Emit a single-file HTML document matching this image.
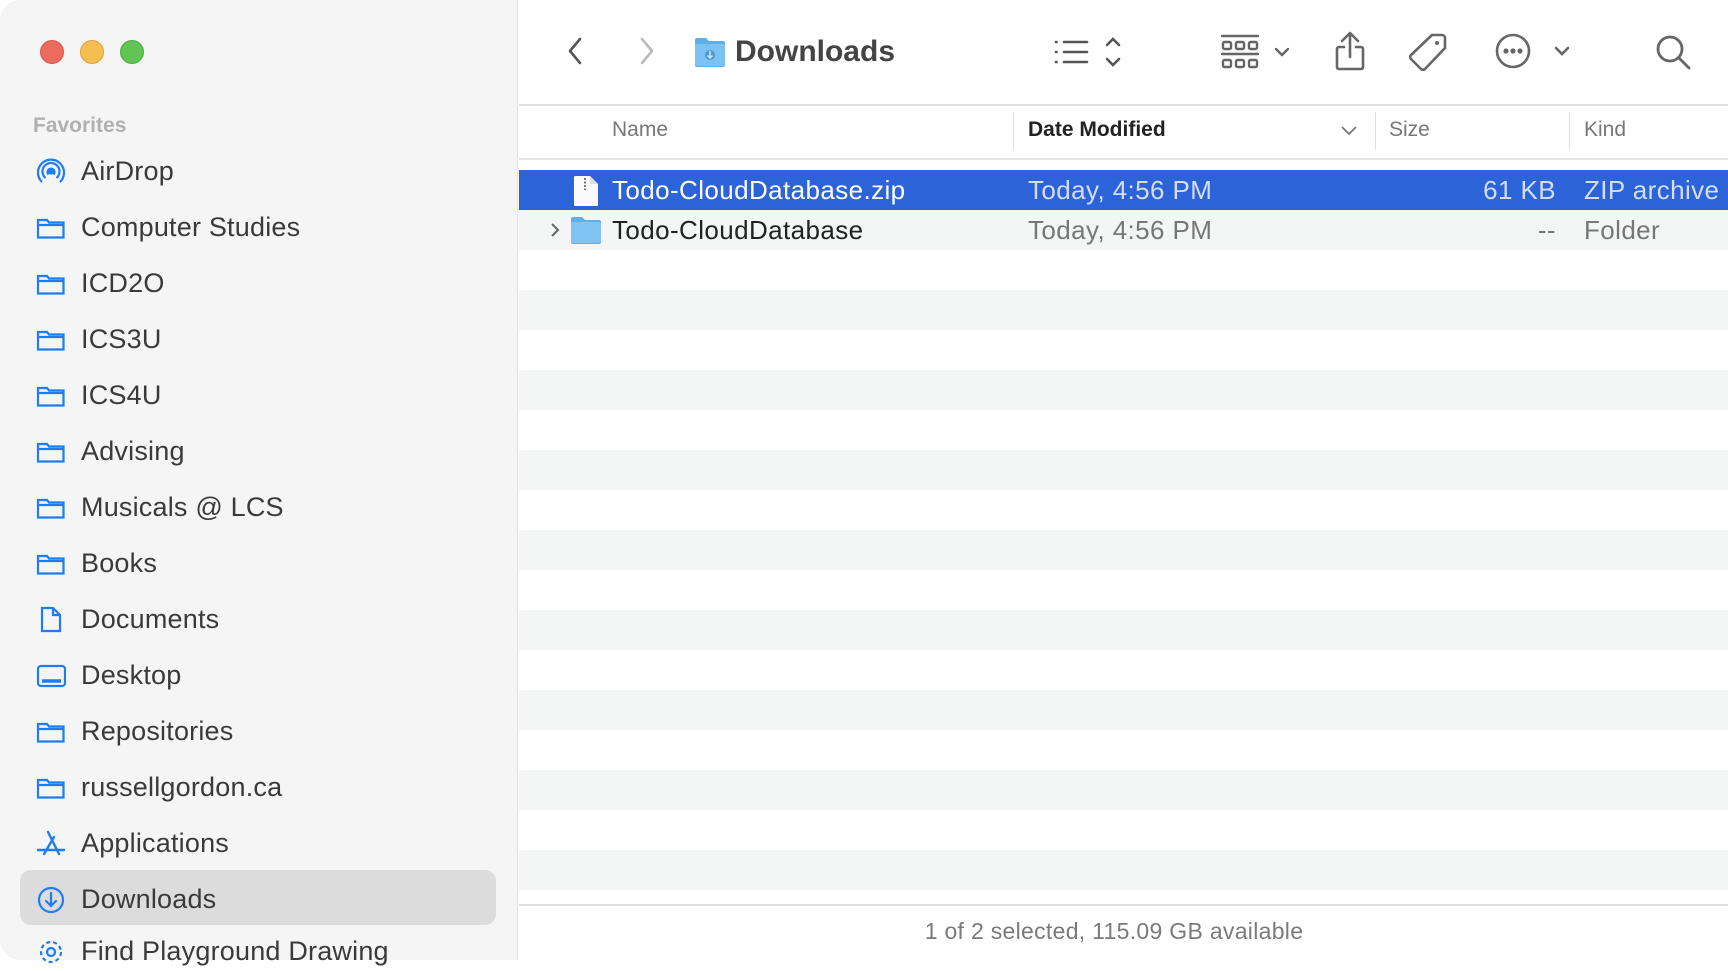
<!DOCTYPE html>
<html><head><meta charset="utf-8"><style>
*{margin:0;padding:0;box-sizing:border-box}
body{width:1728px;height:960px;overflow:hidden;background:#fff;font-family:"Liberation Sans",sans-serif;position:relative}
.sb{position:absolute;left:0;top:0;width:518px;height:960px;background:#f5f5f5;border-right:1px solid #e2e2e2;border-radius:20px 0 0 20px}
.tl{position:absolute;top:40px;width:24px;height:24px;border-radius:50%}
.fav{position:absolute;left:33px;top:114px;font-size:21px;font-weight:bold;color:#b0b0b0}
.it{position:absolute;left:0;height:40px;width:518px;font-size:27px;color:#3a3a3a;line-height:40px;letter-spacing:0.2px}
.it span{position:absolute;left:81px}
.it svg{position:absolute;left:36px;top:6px}
.sel{position:absolute;left:20px;top:870px;width:476px;height:55px;background:#dcdcdc;border-radius:11px}
.hd{position:absolute;top:130px;font-size:21px;color:#777;transform:translateY(-50%)}
.vd{position:absolute;top:112px;width:1px;height:38px;background:#e0e0e0}
.row{position:absolute;left:519px;width:1209px;height:40px}
.cell{position:absolute;font-size:26px;line-height:40px;top:0;letter-spacing:0.4px;white-space:nowrap}
</style></head><body>
<div class="sb"></div>
<div class="tl" style="left:40px;background:#ed6a5e;border:1px solid #d55548"></div>
<div class="tl" style="left:80px;background:#f5bf4f;border:1px solid #d9a23c"></div>
<div class="tl" style="left:120px;background:#61c554;border:1px solid #4ea842"></div>
<div class="fav">Favorites</div>

<div class="sel"></div>
<div class="it" style="top:151px"><svg width="30" height="30" viewBox="0 0 30 30" fill="none" stroke="#1f7cf6" stroke-width="2.2"><path d="M6 25A13 13 0 1 1 24 25"/><path d="M9.5 21A8.5 8.5 0 1 1 20.5 21"/><path d="M12.5 17.5A3.5 3.5 0 1 1 17.5 17.5"/><circle cx="15" cy="15" r="1.5" fill="#1f7cf6"/></svg><span>AirDrop</span></div>
<div class="it" style="top:207px"><svg width="30" height="30" viewBox="0 0 30 30" fill="none" stroke="#1f7cf6" stroke-width="2.2"><path d="M2 7h9l2 2.5h14.5v15H2z M2 12h25.5"/></svg><span>Computer Studies</span></div>
<div class="it" style="top:263px"><svg width="30" height="30" viewBox="0 0 30 30" fill="none" stroke="#1f7cf6" stroke-width="2.2"><path d="M2 7h9l2 2.5h14.5v15H2z M2 12h25.5"/></svg><span>ICD2O</span></div>
<div class="it" style="top:319px"><svg width="30" height="30" viewBox="0 0 30 30" fill="none" stroke="#1f7cf6" stroke-width="2.2"><path d="M2 7h9l2 2.5h14.5v15H2z M2 12h25.5"/></svg><span>ICS3U</span></div>
<div class="it" style="top:375px"><svg width="30" height="30" viewBox="0 0 30 30" fill="none" stroke="#1f7cf6" stroke-width="2.2"><path d="M2 7h9l2 2.5h14.5v15H2z M2 12h25.5"/></svg><span>ICS4U</span></div>
<div class="it" style="top:431px"><svg width="30" height="30" viewBox="0 0 30 30" fill="none" stroke="#1f7cf6" stroke-width="2.2"><path d="M2 7h9l2 2.5h14.5v15H2z M2 12h25.5"/></svg><span>Advising</span></div>
<div class="it" style="top:487px"><svg width="30" height="30" viewBox="0 0 30 30" fill="none" stroke="#1f7cf6" stroke-width="2.2"><path d="M2 7h9l2 2.5h14.5v15H2z M2 12h25.5"/></svg><span>Musicals @ LCS</span></div>
<div class="it" style="top:543px"><svg width="30" height="30" viewBox="0 0 30 30" fill="none" stroke="#1f7cf6" stroke-width="2.2"><path d="M2 7h9l2 2.5h14.5v15H2z M2 12h25.5"/></svg><span>Books</span></div>
<div class="it" style="top:599px"><svg width="30" height="30" viewBox="0 0 30 30" fill="none" stroke="#1f7cf6" stroke-width="2.2"><path d="M6 3h11l7 7v16H6z M17 3v7h7"/></svg><span>Documents</span></div>
<div class="it" style="top:655px"><svg width="30" height="30" viewBox="0 0 30 30" fill="none" stroke="#1f7cf6" stroke-width="2.2"><rect x="2" y="5" width="27" height="20" rx="3"/><path d="M6 20h19" stroke-width="3.5"/></svg><span>Desktop</span></div>
<div class="it" style="top:711px"><svg width="30" height="30" viewBox="0 0 30 30" fill="none" stroke="#1f7cf6" stroke-width="2.2"><path d="M2 7h9l2 2.5h14.5v15H2z M2 12h25.5"/></svg><span>Repositories</span></div>
<div class="it" style="top:767px"><svg width="30" height="30" viewBox="0 0 30 30" fill="none" stroke="#1f7cf6" stroke-width="2.2"><path d="M2 7h9l2 2.5h14.5v15H2z M2 12h25.5"/></svg><span>russellgordon.ca</span></div>
<div class="it" style="top:823px"><svg width="30" height="30" viewBox="0 0 30 30" fill="none" stroke="#1f7cf6" stroke-width="2.4" stroke-linecap="round"><path d="M12 3l11 22 M18 8L8 25 M2 21h26"/></svg><span>Applications</span></div>
<div class="it" style="top:879px"><svg width="30" height="30" viewBox="0 0 30 30" fill="none" stroke="#1f7cf6" stroke-width="2.2" stroke-linecap="round"><circle cx="15" cy="15" r="12"/><path d="M15 8v13 M10 16l5 5 5-5"/></svg><span>Downloads</span></div>
<div class="it" style="top:931px"><svg width="30" height="30" viewBox="0 0 30 30" fill="none" stroke="#1f7cf6" stroke-width="2.2"><circle cx="15" cy="15" r="4"/><circle cx="15" cy="15" r="10" stroke-dasharray="4 3"/></svg><span>Find Playground Drawing</span></div>

<!-- toolbar -->
<svg style="position:absolute;left:558px;top:31px" width="40" height="40" viewBox="0 0 40 40" fill="none" stroke="#555" stroke-width="2.6" stroke-linecap="round" stroke-linejoin="round"><path d="M22 8L12 20l10 12"/></svg>
<svg style="position:absolute;left:630px;top:31px" width="40" height="40" viewBox="0 0 40 40" fill="none" stroke="#bbb" stroke-width="2.6" stroke-linecap="round" stroke-linejoin="round"><path d="M12 8l10 12-10 12"/></svg>
<svg style="position:absolute;left:694px;top:37px" width="32" height="30" viewBox="0 0 32 30"><path d="M1 3a2 2 0 0 1 2-2h9l3 3h14a2 2 0 0 1 2 2v22a2 2 0 0 1-2 2H3a2 2 0 0 1-2-2z" fill="#5fb0ea"/><rect x="1" y="7" width="30" height="22" rx="2" fill="#7cc2f3"/><circle cx="16" cy="18" r="5" fill="#4a9ad6"/><path d="M16 14v7M13.5 18.5l2.5 2.5 2.5-2.5" stroke="#cfe8fb" stroke-width="1.5" fill="none"/></svg>
<div style="position:absolute;left:735px;top:35px;font-size:30px;font-weight:bold;color:#444">Downloads</div>
<svg style="position:absolute;left:1052px;top:35px" width="80" height="36" viewBox="0 0 80 36" fill="none" stroke="#555" stroke-width="2.6" stroke-linecap="round"><path d="M4 7h.5M4 17h.5M4 27h.5M12 7h23M12 17h23M12 27h23"/><path d="M55 10l6-6 6 6M55 24l6 6 6-6"/></svg>
<svg style="position:absolute;left:1220px;top:33px" width="76" height="40" viewBox="0 0 76 40" fill="none" stroke="#666" stroke-width="2.4" stroke-linecap="round"><path d="M2 3h36M2 21h36"/><rect x="3" y="9" width="8" height="7" rx="1.5"/><rect x="16" y="9" width="8" height="7" rx="1.5"/><rect x="29" y="9" width="8" height="7" rx="1.5"/><rect x="3" y="27" width="8" height="7" rx="1.5"/><rect x="16" y="27" width="8" height="7" rx="1.5"/><rect x="29" y="27" width="8" height="7" rx="1.5"/><path d="M56 16l6 6 6-6"/></svg>
<svg style="position:absolute;left:1330px;top:29px" width="40" height="44" viewBox="0 0 40 44" fill="none" stroke="#666" stroke-width="2.6" stroke-linecap="round" stroke-linejoin="round"><path d="M20 4v24M12 12l8-8 8 8M14 18H9a2 2 0 0 0-2 2v18a2 2 0 0 0 2 2h22a2 2 0 0 0 2-2V20a2 2 0 0 0-2-2h-5"/></svg>
<svg style="position:absolute;left:1406px;top:31px" width="44" height="44" viewBox="0 0 44 44" fill="none" stroke="#666" stroke-width="2.6" stroke-linejoin="round"><path d="M26 4h10a3 3 0 0 1 3 3v10L19 38a3 3 0 0 1-4 0L5 28a3 3 0 0 1 0-4z"/><circle cx="31" cy="12" r="2" fill="#666" stroke="none"/></svg>
<svg style="position:absolute;left:1494px;top:32px" width="80" height="40" viewBox="0 0 80 40" fill="none" stroke="#666" stroke-width="2.6" stroke-linecap="round"><circle cx="19" cy="19" r="16"/><circle cx="12" cy="19" r="1.3" fill="#666"/><circle cx="19" cy="19" r="1.3" fill="#666"/><circle cx="26" cy="19" r="1.3" fill="#666"/><path d="M62 16l6 6 6-6"/></svg>
<svg style="position:absolute;left:1652px;top:31px" width="44" height="44" viewBox="0 0 44 44" fill="none" stroke="#666" stroke-width="2.8" stroke-linecap="round"><circle cx="18" cy="18" r="12"/><path d="M27 27l10 10"/></svg>
<div style="position:absolute;left:519px;top:104px;width:1209px;height:2px;background:#e2e2e2"></div>

<!-- header -->
<div class="hd" style="left:612px">Name</div>
<div class="vd" style="left:1013px"></div>
<div class="hd" style="left:1028px;color:#222;font-weight:bold">Date Modified</div>
<svg style="position:absolute;left:1340px;top:124px" width="18" height="12" viewBox="0 0 18 12" fill="none" stroke="#777" stroke-width="1.8"><path d="M2 3l7 7 7-7"/></svg>
<div class="vd" style="left:1375px"></div>
<div class="hd" style="left:1389px">Size</div>
<div class="vd" style="left:1569px"></div>
<div class="hd" style="left:1584px">Kind</div>
<div style="position:absolute;left:519px;top:158px;width:1209px;height:2px;background:#e6e6e6"></div>

<!-- rows -->
<div class="row" style="top:170px;background:#2c63d9">
  <svg style="position:absolute;left:53px;top:5px" width="28" height="32" viewBox="0 0 28 32"><path d="M3 1h15l8 8v21a1 1 0 0 1-1 1H3a1 1 0 0 1-1-1V2a1 1 0 0 1 1-1z" fill="#fafafa"/><path d="M18 1v8h8" fill="#ddd"/><path d="M13 3v12" stroke="#777" stroke-width="2" stroke-dasharray="2 1.5"/></svg>
  <div class="cell" style="left:93px;color:#fff">Todo-CloudDatabase.zip</div>
  <div class="cell" style="left:509px;color:#d3ddf5">Today, 4:56 PM</div>
  <div class="cell" style="right:172px;color:#d3ddf5">61 KB</div>
  <div class="cell" style="left:1065px;color:#d3ddf5">ZIP archive</div>
</div>
<div class="row" style="top:210px;background:#f4f5f5">
  <svg style="position:absolute;left:30px;top:12px" width="12" height="16" viewBox="0 0 12 16" fill="none" stroke="#666" stroke-width="2"><path d="M3 2l6 6-6 6"/></svg>
  <svg style="position:absolute;left:51px;top:6px" width="32" height="28" viewBox="0 0 32 28"><path d="M1 3a2 2 0 0 1 2-2h9l3 3h14a2 2 0 0 1 2 2v20a2 2 0 0 1-2 2H3a2 2 0 0 1-2-2z" fill="#5fb0ea"/><rect x="1" y="6" width="30" height="21" rx="2" fill="#80c4f4"/></svg>
  <div class="cell" style="left:93px;color:#222">Todo-CloudDatabase</div>
  <div class="cell" style="left:509px;color:#777">Today, 4:56 PM</div>
  <div class="cell" style="right:172px;color:#777">--</div>
  <div class="cell" style="left:1065px;color:#777">Folder</div>
</div>
<div class="row" style="top:290px;background:#f4f5f5"></div>
<div class="row" style="top:370px;background:#f4f5f5"></div>
<div class="row" style="top:450px;background:#f4f5f5"></div>
<div class="row" style="top:530px;background:#f4f5f5"></div>
<div class="row" style="top:610px;background:#f4f5f5"></div>
<div class="row" style="top:690px;background:#f4f5f5"></div>
<div class="row" style="top:770px;background:#f4f5f5"></div>
<div class="row" style="top:850px;background:#f4f5f5"></div>

<div style="position:absolute;left:519px;top:904px;width:1209px;height:2px;background:#e0e0e0"></div>
<div style="position:absolute;left:519px;top:906px;width:1209px;height:54px;background:#fff"></div>
<div style="position:absolute;left:519px;top:918px;width:1190px;text-align:center;font-size:23px;color:#7a7a7a;letter-spacing:0.3px">1 of 2 selected, 115.09 GB available</div>
</body></html>
